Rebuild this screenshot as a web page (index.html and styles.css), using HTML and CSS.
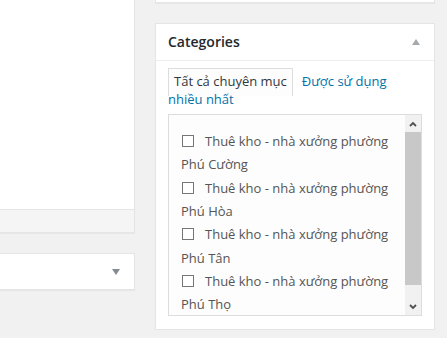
FILE: index.html
```html
<!DOCTYPE html>
<html lang="vi">
<head>
<meta charset="utf-8">
<title>Categories</title>
<link rel="stylesheet" href="styles.css">
</head>
<body>
<div class="page">
  <div class="main">
    <div class="editor">
      <div class="editor-body"></div>
      <div class="editor-foot"></div>
    </div>
    <div class="postbox closed-box">
      <span class="tri-down"></span>
    </div>
  </div>
  <div class="side">
    <div class="prev-box"></div>
    <div class="postbox cat-box">
      <h2 class="hndle"><span>Categories</span><span class="tri-up"></span></h2>
      <div class="inside">
        <ul class="category-tabs"><li class="tab-active">Tất cả chuyên mục</li><li class="tab-link"><a href="#">Được sử dụng nhiều nhất</a></li></ul>
        <div class="tabs-panel">
          <ul class="checklist">
            <li><span class="cb"></span>Thuê kho - nhà xưởng phường Phú Cường</li>
            <li><span class="cb"></span>Thuê kho - nhà xưởng phường Phú Hòa</li>
            <li><span class="cb"></span>Thuê kho - nhà xưởng phường Phú Tân</li>
            <li><span class="cb"></span>Thuê kho - nhà xưởng phường Phú Thọ</li>
          </ul>
          <div class="scrollbar">
            <div class="sb-btn"><svg width="8" height="6" viewBox="0 0 8 6"><polyline points="1,5 4,2 7,5" fill="none" stroke="#505050" stroke-width="1.8"/></svg></div>
            <div class="sb-thumb"></div>
            <div class="sb-track"></div>
            <div class="sb-btn"><svg width="8" height="6" viewBox="0 0 8 6"><polyline points="1,1 4,4 7,1" fill="none" stroke="#505050" stroke-width="1.8"/></svg></div>
          </div>
        </div>
      </div>
    </div>
  </div>
</div>
</body>
</html>
```

FILE: styles.css
```css
html, body {
  margin: 0;
  padding: 0;
  background: #f1f1f1;
  font-family: "Open Sans", "Noto Sans", sans-serif;
  font-size: 13px;
  color: #444;
}

.page {
  display: flex;
  align-items: flex-start;
}

.main {
  width: 135px;
  flex: none;
}

.editor {
  background: #fff;
  border-right: 1px solid #e5e5e5;
  border-bottom: 1px solid #e5e5e5;
  box-shadow: 0 1px 1px rgba(0, 0, 0, 0.04);
}

.editor-body {
  height: 209px;
}

.editor-foot {
  height: 22px;
  background: #f5f5f5;
  border-top: 1px solid #e5e5e5;
}

.postbox {
  background: #fff;
  border: 1px solid #e5e5e5;
  box-shadow: 0 1px 1px rgba(0, 0, 0, 0.04);
}

.closed-box {
  margin-top: 20px;
  height: 35px;
  border-left: none;
  display: flex;
  align-items: center;
  justify-content: flex-end;
  padding-right: 14px;
}

.tri-down {
  width: 0;
  height: 0;
  border-left: 4px solid transparent;
  border-right: 4px solid transparent;
  border-top: 6px solid #848b93;
}

.side {
  width: 280px;
  flex: none;
  margin-left: 20px;
}

.prev-box {
  height: 2px;
  background: #fff;
  border: 1px solid #e5e5e5;
  border-top: none;
  box-shadow: 0 1px 1px rgba(0, 0, 0, 0.04);
}

.cat-box {
  margin-top: 20px;
}

.hndle {
  margin: 0;
  padding: 8px 12px;
  font-size: 14px;
  font-weight: 600;
  line-height: 20px;
  color: #23282d;
  border-bottom: 1px solid #eee;
  display: flex;
  align-items: center;
  justify-content: space-between;
}

.tri-up {
  width: 0;
  height: 0;
  border-left: 4px solid transparent;
  border-right: 4px solid transparent;
  border-bottom: 6px solid #a4a9ae;
  margin-right: 2px;
}

.inside {
  padding: 0 12px 13px;
}

.category-tabs {
  list-style: none;
  margin: 12px 0 6px;
  padding: 0;
  line-height: 1.35;
}

.category-tabs li {
  display: inline;
}

.tab-active {
  padding: 3px 5px 6px;
  border: 1px solid #ddd;
  border-bottom: none;
  background: #fdfdfd;
  color: #32373c;
}

.tab-link {
  margin-left: 9px;
}

.tab-link a {
  color: #0073aa;
  text-decoration: none;
}

.tabs-panel {
  height: 200px;
  border: 1px solid #ddd;
  background: #fdfdfd;
  display: flex;
  overflow: hidden;
}

.checklist {
  flex: 1;
  list-style: none;
  margin: 0;
  padding: 15px 12px 0 12px;
  line-height: 23.33px;
  color: #555;
  overflow: hidden;
}

.cb {
  display: inline-block;
  width: 10px;
  height: 10px;
  border: 1px solid #767676;
  background: #fff;
  margin: 0 11px 0 1px;
  vertical-align: -1px;
}

.scrollbar {
  width: 16px;
  flex: none;
  background: #f1f1f1;
  display: flex;
  flex-direction: column;
}

.sb-btn {
  height: 17px;
  display: flex;
  align-items: center;
  justify-content: center;
}

.sb-thumb {
  height: 153px;
  background: #c8c8c8;
}

.sb-track {
  flex: 1;
}
```
